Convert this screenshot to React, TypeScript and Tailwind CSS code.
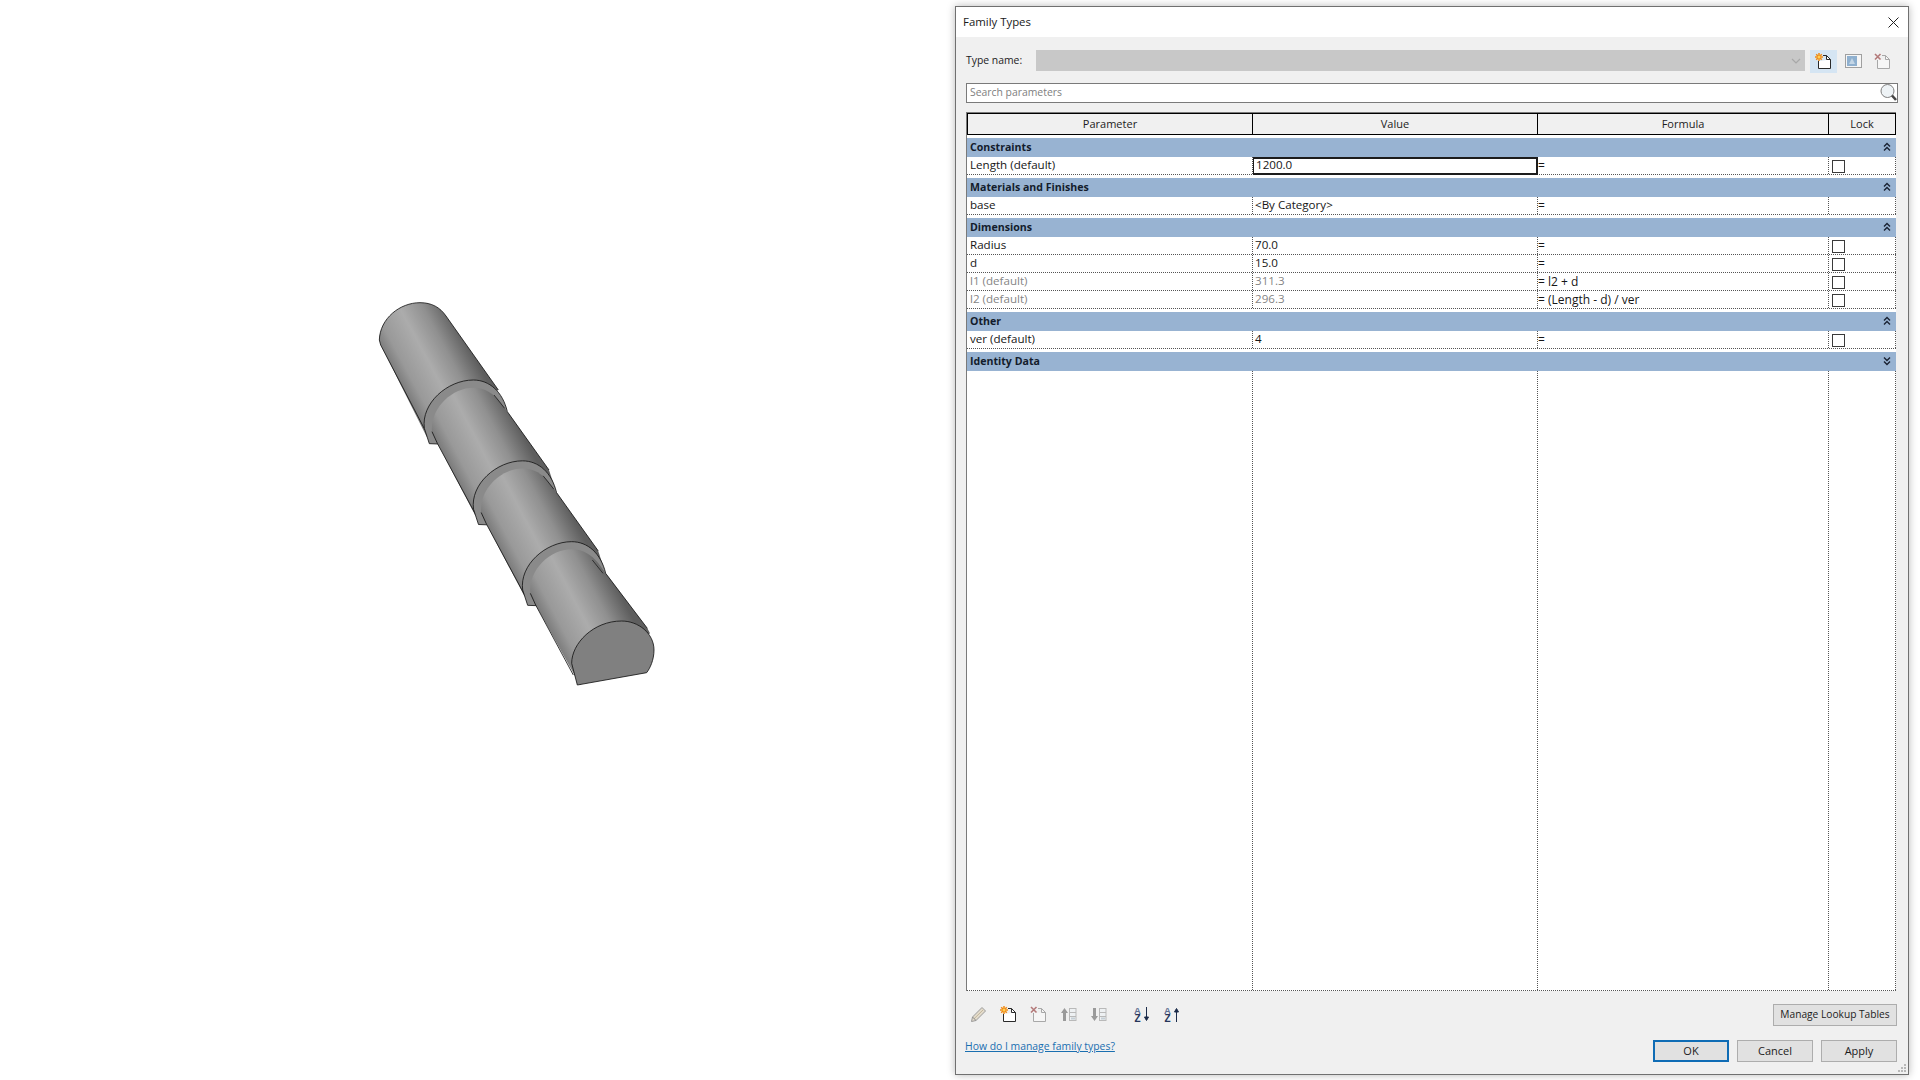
import React from "react";

const Chevrons = ({ up }: { up: boolean }) => (
  <svg width="8" height="10" viewBox="0 0 8 10" fill="none" stroke="#1a2233" strokeWidth="1.4">
    {up ? (
      <>
        <path d="M1 4.5 L4 1.5 L7 4.5" />
        <path d="M1 8.5 L4 5.5 L7 8.5" />
      </>
    ) : (
      <>
        <path d="M1 1.5 L4 4.5 L7 1.5" />
        <path d="M1 5.5 L4 8.5 L7 5.5" />
      </>
    )}
  </svg>
);

const Asterisk = () => (
  <g>
    <path d="M4 0 V8 M0 4 H8 M1.2 1.2 L6.8 6.8 M6.8 1.2 L1.2 6.8" stroke="#f08a14" strokeWidth="1.5" />
    <circle cx="4" cy="4" r="1.5" fill="#ffcf55" />
  </g>
);

const NewDocIcon = () => (
  <svg width="17" height="17" viewBox="0 0 17 17">
    <path d="M3.5 8 V15.5 H15.5 V6.5 L11.5 2.5 V6.5 H15.5 M11.5 2.5 H8" fill="#fff" stroke="#2a2a2a" strokeWidth="1" />
    <Asterisk />
  </svg>
);

const DeleteDocIcon = () => (
  <svg width="17" height="17" viewBox="0 0 17 17">
    <path d="M3.5 7 V15.5 H15.5 V6.5 L11.5 2.5 V6.5 H15.5 M11.5 2.5 H8" fill="#f6f6f6" stroke="#a8a8a8" strokeWidth="1" />
    <path d="M1 1 L6.5 6.5 M6.5 1 L1 6.5" stroke="#b47a7a" strokeWidth="1.6" />
  </svg>
);

const RenameIcon = () => (
  <svg width="17" height="15" viewBox="0 0 17 15">
    <rect x="0.5" y="0.5" width="16" height="13" fill="#f6f6f6" stroke="#a0a0a0" />
    <rect x="2" y="2" width="10" height="10" fill="#8fb0cf" />
    <path d="M4 10 L7 4 L10 10 Z" fill="#c4d6e6" />
  </svg>
);

const PencilIcon = () => (
  <svg width="17" height="17" viewBox="0 0 17 17">
    <path d="M1.5 15.5 L2.5 11 L12 1.5 L15.5 5 L6 14.5 Z" fill="#e4dccc" stroke="#9a9a9a" strokeWidth="1" />
    <path d="M4 12.8 L13 4" stroke="#c2b69c" strokeWidth="1" />
    <path d="M2.5 11 L6 14.5" stroke="#8a8a8a" strokeWidth="1" />
  </svg>
);

const MoveIcon = ({ up }: { up: boolean }) => (
  <svg width="17" height="15" viewBox="0 0 17 15">
    <path d={up ? "M4.5 1 L8 6 H6 V14 H3 V6 H1 Z" : "M3 1 H6 V9 H8 L4.5 14 L1 9 H3 Z"} fill="#9a9a9a" />
    <rect x="9.5" y="1.5" width="6.5" height="12" fill="#eef1f3" stroke="#b9b9b9" />
    <path d="M9.5 5.5 H16 M9.5 9.5 H16" stroke="#b9b9b9" />
    <rect x="11" y="10.5" width="4" height="2" fill="#c5cfd6" />
  </svg>
);

const SortIcon = ({ up }: { up: boolean }) => (
  <svg width="17" height="17" viewBox="0 0 17 17">
    <text x="0" y="7.5" fontFamily="Liberation Sans, sans-serif" fontWeight="700" fontSize="9.5" fill="#5f6f92">
      A
    </text>
    <text x="0.5" y="16" fontFamily="Liberation Sans, sans-serif" fontWeight="700" fontSize="10" fill="#27365a">
      Z
    </text>
    <path
      d={up ? "M12.5 16 V4 M10.5 6 L12.5 2.5 L14.5 6 Z" : "M12.5 1 V13 M10.5 11 L12.5 14.5 L14.5 11 Z"}
      stroke="#1c2c4a"
      strokeWidth="1"
      fill="#1c2c4a"
    />
  </svg>
);

const Stops = () => (
  <>
    <stop offset="0" stopColor="#7c7c7c" />
    <stop offset="0.15" stopColor="#999999" />
    <stop offset="0.45" stopColor="#acacac" />
    <stop offset="0.72" stopColor="#909090" />
    <stop offset="1" stopColor="#5e5e5e" />
  </>
);

const Cylinder = () => (
  <svg width="320" height="420" viewBox="0 0 960 1260" className="block">
    <defs>
      <linearGradient id="g1" gradientUnits="userSpaceOnUse" x1="130" y1="325" x2="335" y2="215">
        <Stops />
      </linearGradient>
      <linearGradient id="g2" gradientUnits="userSpaceOnUse" x1="290" y1="595" x2="500" y2="485">
        <Stops />
      </linearGradient>
      <linearGradient id="g4" gradientUnits="userSpaceOnUse" x1="585" y1="1080" x2="795" y2="970">
        <Stops />
      </linearGradient>
      <g id="collar">
        <path d="M208,491 L193,445 C183,370 262,300 340,300 C388,300 428,335 442,395 L235,492 Z" fill="#8a8a8a" />
        <path d="M235,492 L208,491 L193,445 C183,370 262,300 340,300 C388,300 428,335 442,395" fill="none" stroke="#141414" strokeWidth="2.5" />
      </g>
      <g id="seg">
        <path d="M216,455 C210,385 275,323 340,323 C375,323 400,340 420,365 L442,395 L567,570 L590,640 L345,705 L232,490 Z" fill="url(#g2)" />
        <path d="M442,395 L567,570" stroke="#141414" strokeWidth="2.5" fill="none" />
        <path d="M402,345 L434,385" stroke="#222" strokeWidth="2.5" fill="none" />
        <path d="M216,455 L232,490 L345,700" stroke="#141414" strokeWidth="2.5" fill="none" />
      </g>
    </defs>
    <path d="M58,180 C60,115 120,68 180,68 C215,68 240,82 258,108 L415,330 L200,470 L62,195 Z" fill="url(#g1)" />
    <path d="M195,450 L62,195 L58,180 C60,115 120,68 180,68 C215,68 240,82 258,108 L415,330" fill="none" stroke="#141414" strokeWidth="2.5" />
    <use href="#collar" />
    <use href="#seg" />
    <use href="#collar" transform="translate(147.5 242.5)" />
    <use href="#seg" transform="translate(147.5 242.5)" />
    <use href="#collar" transform="translate(295 485)" />
    <path d="M511,940 C505,870 570,808 635,808 C670,808 695,825 715,850 L737,880 L862,1045 L870,1060 L660,1215 L635,1170 L527,975 Z" fill="url(#g4)" />
    <path d="M737,880 L862,1045" stroke="#141414" strokeWidth="2.5" fill="none" />
    <path d="M697,840 L729,880" stroke="#222" strokeWidth="2.5" fill="none" />
    <path d="M511,940 L527,975 L640,1185" stroke="#141414" strokeWidth="2.5" fill="none" />
    <path d="M652,1215 L635,1150 C635,1090 700,1023 785,1023 C835,1023 882,1060 882,1110 C882,1140 870,1165 860,1178 Z" fill="#808080" stroke="#141414" strokeWidth="2.5" strokeLinejoin="round" />
  </svg>
);

const Checkbox = () => <div className="w-[13px] h-[13px] border border-[#3a3a3a] bg-white mt-[3px] ml-[3px]" />;

type Row = { name: string; value: string; formula?: string; grey?: boolean; lock?: boolean; focus?: boolean };
type Group = { title: string; open: boolean; rows: Row[] };

const groups: Group[] = [
  { title: "Constraints", open: true, rows: [{ name: "Length (default)", value: "1200.0", lock: true, focus: true }] },
  { title: "Materials and Finishes", open: true, rows: [{ name: "base", value: "<By Category>" }] },
  {
    title: "Dimensions",
    open: true,
    rows: [
      { name: "Radius", value: "70.0", lock: true },
      { name: "d", value: "15.0", lock: true },
      { name: "l1 (default)", value: "311.3", formula: " l2 + d", grey: true, lock: true },
      { name: "l2 (default)", value: "296.3", formula: " (Length - d) / ver", grey: true, lock: true },
    ],
  },
  { title: "Other", open: true, rows: [{ name: "ver (default)", value: "4", lock: true }] },
  { title: "Identity Data", open: false, rows: [] },
];

const SectionBar = ({ title, open }: { title: string; open: boolean }) => (
  <div className="h-[19px] mt-[3px] pb-[1px] bg-[#98b3d2] flex items-center justify-between pl-[3px] pr-[5px] font-bold text-[10.6px] text-[#131c2c] leading-none">
    <span>{title}</span>
    <Chevrons up={open} />
  </div>
);

const DataRow = ({ row }: { row: Row }) => {
  const tone = row.grey ? "text-[#858585]" : "text-[#161616]";
  return (
    <div className="h-[18px] grid grid-cols-[286px_285px_291px_67px] border-b border-dotted border-[#555] leading-[16px] text-[11.6px] bg-white">
      <div className={`pl-[3px] border-r border-dotted border-[#555] ${tone}`}>{row.name}</div>
      {row.focus ? (
        <div className="pl-[2px] border-2 border-[#1c1c1c] border-l-[1px] h-[18px] -mb-px text-[#161616] leading-[12px]">{row.value}</div>
      ) : (
        <div className={`pl-[2px] border-r border-dotted border-[#555] ${tone}`}>{row.value}</div>
      )}
      <div className="border-r border-dotted border-[#555] text-[#161616] text-[12px] leading-[17px] whitespace-pre">={row.formula ?? ""}</div>
      <div className="border-r border-dotted border-[#555]">{row.lock && <Checkbox />}</div>
    </div>
  );
};

const FootButton = ({ label, primary, wide }: { label: string; primary?: boolean; wide?: boolean }) => (
  <button
    className={`h-[22px] flex items-center justify-center bg-[#e1e1e1] text-[#1c1c1c] ${wide ? "w-[124px] text-[10.2px]" : "w-[76px] text-[11px]"} ${
      primary ? "border-2 border-[#0f6cb5]" : "border border-[#adadad]"
    }`}
  >
    {label}
  </button>
);

const Slot = ({ children, className }: { children: React.ReactNode; className?: string }) => (
  <div className={`w-[24px] h-[22px] pb-[2px] flex items-center justify-center ${className ?? ""}`}>{children}</div>
);

export default function App() {
  return (
    <div className="w-[1920px] h-[1080px] overflow-hidden bg-white flex font-['Open_Sans',sans-serif] text-[10.4px]">
      <div className="w-[955px] pl-[360px] pt-[280px] shrink-0">
        <Cylinder />
      </div>
      <div className="relative w-[954px] h-[1069px] mt-[6px] border border-[#707070] bg-[#f0f0f0] flex flex-col shadow-[0_0_8px_rgba(0,0,0,0.28)]">
        <div className="h-[30px] bg-white flex items-center justify-between pl-[7px] pr-[9px] shrink-0">
          <span className="text-[#1a1a1a] text-[11.4px]">Family Types</span>
          <svg width="11" height="11" viewBox="0 0 11 11" stroke="#222" strokeWidth="1" fill="none">
            <path d="M0.5 0.5 L10.5 10.5 M10.5 0.5 L0.5 10.5" />
          </svg>
        </div>
        <div className="flex-1 flex flex-col pl-[10px] pr-[10px]">
          <div className="mt-[13px] h-[23px] flex items-start">
            <span className="w-[70px] leading-[20px] text-[#1c1c1c]">Type name:</span>
            <div className="w-[769px] h-[21px] bg-[#c8c8c8] flex items-center justify-end pr-[4px]">
              <svg width="10" height="6" viewBox="0 0 10 6" fill="none" stroke="#a8a8a8" strokeWidth="1.2">
                <path d="M1 1 L5 5 L9 1" />
              </svg>
            </div>
            <div className="ml-[5px] w-[27px] h-[23px] bg-[#d5e5f3] flex items-center justify-center">
              <NewDocIcon />
            </div>
            <div className="ml-[7px] w-[18px] h-[23px] flex items-center justify-center">
              <RenameIcon />
            </div>
            <div className="ml-[11px] w-[19px] h-[23px] flex items-center justify-center">
              <DeleteDocIcon />
            </div>
          </div>
          <div className="relative mt-[10px] h-[20px] border border-[#7a7a7a] bg-white flex items-center pl-[3px] pb-[1px] text-[#808080]">
            Search parameters
            <svg className="absolute right-0 top-0" width="18" height="19" viewBox="0 0 18 19" fill="none">
              <circle cx="8.5" cy="7" r="6.5" fill="#eef3f6" stroke="#7f7f7f" strokeWidth="1" />
              <path d="M13 11.5 L17 16" stroke="#444" strokeWidth="2.6" />
            </svg>
          </div>
          <div className="mt-[9px] w-[930px] h-[879px] border-t border-l border-[#7a7a7a] bg-white flex flex-col">
            <div className="h-[22px] grid grid-cols-[285px_285px_291px_66px] border border-black bg-[#f0f0f0] text-[11px] text-[#1c1c1c] text-center leading-[20px] shrink-0 w-[929px]">
              <div className="border-r border-black">Parameter</div>
              <div className="border-r border-black">Value</div>
              <div className="border-r border-black">Formula</div>
              <div>Lock</div>
            </div>
            {groups.map((g) => (
              <div key={g.title}>
                <SectionBar title={g.title} open={g.open} />
                {g.rows.map((r) => (
                  <DataRow key={r.name} row={r} />
                ))}
              </div>
            ))}
            <div className="flex-1 grid grid-cols-[286px_285px_291px_67px] border-b border-dotted border-[#555]">
              <div className="border-r border-dotted border-[#555]" />
              <div className="border-r border-dotted border-[#555]" />
              <div className="border-r border-dotted border-[#555]" />
              <div className="border-r border-dotted border-[#555]" />
            </div>
          </div>
          <div className="mt-[13px] h-[22px] flex items-center justify-between w-[931px]">
            <div className="flex items-center gap-[6px]">
              <Slot><PencilIcon /></Slot>
              <Slot><NewDocIcon /></Slot>
              <Slot><DeleteDocIcon /></Slot>
              <Slot><MoveIcon up /></Slot>
              <Slot><MoveIcon up={false} /></Slot>
              <Slot className="ml-[14px]"><SortIcon up={false} /></Slot>
              <Slot><SortIcon up /></Slot>
            </div>
            <FootButton label="Manage Lookup Tables" wide />
          </div>
          <div className="mt-[14px] h-[22px] flex items-start justify-between w-[931px]">
            <a className="text-[#1a6fb0] underline leading-[13px] -ml-[1px]">How do I manage family types?</a>
            <div className="flex items-center gap-[8px]">
              <FootButton label="OK" primary />
              <FootButton label="Cancel" />
              <FootButton label="Apply" />
            </div>
          </div>
        </div>
        <svg className="absolute right-[1px] bottom-[1px]" width="10" height="10" viewBox="0 0 10 10" fill="#b8b8b8">
          <rect x="7" y="1" width="2" height="2" />
          <rect x="4" y="4" width="2" height="2" />
          <rect x="7" y="4" width="2" height="2" />
          <rect x="1" y="7" width="2" height="2" />
          <rect x="4" y="7" width="2" height="2" />
          <rect x="7" y="7" width="2" height="2" />
        </svg>
      </div>
    </div>
  );
}
